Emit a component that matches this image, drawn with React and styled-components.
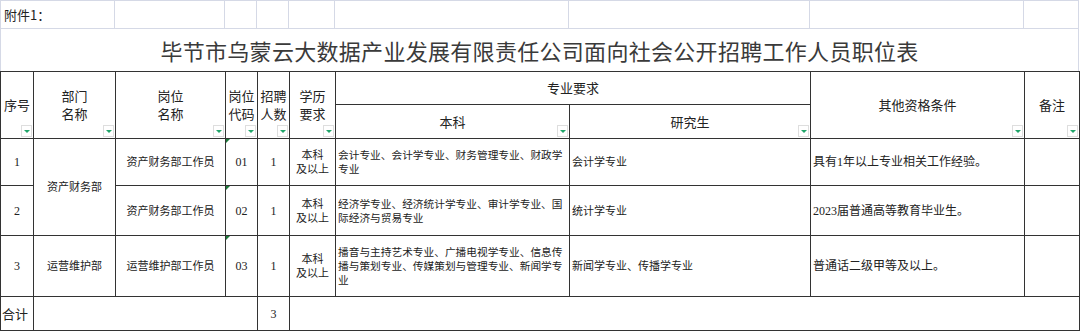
import styled, { createGlobalStyle } from 'styled-components';

const GlobalStyle = createGlobalStyle`
  html, body {
    margin: 0;
    padding: 0;
    background: #fff;
  }
  body {
    font-family: "Noto Sans CJK SC", sans-serif;
    color: #222;
  }
`;

const COLS = [33, 82, 110, 32, 32, 46, 234, 241, 214, 55];
const LIGHT = '#d5d9e6';
const DARK = '#333';

const Sheet = styled.div`
  width: 1079px;
`;

const TopRow = styled.div`
  display: grid;
  grid-template-columns: 115px ${COLS.slice(2).map((w) => `${w}px`).join(' ')};
  height: 28px;
  border-top: 1px solid ${LIGHT};
  box-sizing: border-box;
`;

const TopCell = styled.div`
  border-right: 1px solid ${LIGHT};
  border-bottom: 1px solid ${LIGHT};
  font-size: 13px;
  line-height: 27px;
  padding-left: 3px;
  color: #222;

  &:first-child {
    border-left: 1px solid ${LIGHT};
  }
`;

const Title = styled.div`
  height: 43px;
  border-left: 1px solid ${LIGHT};
  border-right: 1px solid ${LIGHT};
  box-sizing: border-box;
  display: flex;
  align-items: center;
  justify-content: center;
  font-size: 22px;
  color: #3a3a3a;
  letter-spacing: 0.3px;
`;

const Table = styled.table`
  width: 1079px;
  table-layout: fixed;
  border-collapse: collapse;
  font-family: "Liberation Serif", "Noto Sans CJK SC", serif;
`;

const Row = styled.tr`
  height: ${(p) => p.$h}px;
`;

const Th = styled.th`
  position: relative;
  border: 1px solid ${DARK};
  padding: 0;
  font-family: "Noto Sans CJK SC", sans-serif;
  font-weight: 400;
  font-size: 13px;
  line-height: 18px;
  color: #222;
  text-align: center;
  vertical-align: middle;
  white-space: nowrap;
`;

const FilterBtn = styled.span`
  position: absolute;
  right: 1px;
  bottom: 1px;
  width: 11px;
  height: 12px;
  box-sizing: border-box;
  border: 1px solid #dedede;
  background: #fff;

  &::after {
    content: '';
    position: absolute;
    left: 2px;
    top: 4px;
    border-left: 3px solid transparent;
    border-right: 3px solid transparent;
    border-top: 3px solid #21a56a;
  }
`;

const Td = styled.td`
  border: 1px solid ${DARK};
  padding: ${(p) => (p.$align === 'left' ? '0 0 0 2px' : '0')};
  font-size: ${(p) => p.$size || 11}px;
  line-height: ${(p) => (p.$size === 12 ? 16 : 14)}px;
  text-align: ${(p) => p.$align || 'center'};
  vertical-align: middle;
  white-space: nowrap;
  overflow: hidden;
  color: #222;
`;

const CodeCell = styled(Td)`
  position: relative;

  &::before {
    content: '';
    position: absolute;
    left: 0;
    top: 0;
    border-top: 4px solid #1c7a3a;
    border-right: 4px solid transparent;
  }
`;

const SumLabel = styled(Td)`
  font-family: "Noto Sans CJK SC", sans-serif;
  font-size: 13px;
  text-align: left;
  padding-left: 1px;
`;

const rows = [
  {
    no: '1',
    dept: '资产财务部',
    deptSpan: 2,
    post: '资产财务部工作员',
    code: '01',
    count: '1',
    major: ['会计专业、会计学专业、财务管理专业、财政学', '专业'],
    grad: '会计学专业',
    other: '具有1年以上专业相关工作经验。',
    h: 47,
  },
  {
    no: '2',
    post: '资产财务部工作员',
    code: '02',
    count: '1',
    major: ['经济学专业、经济统计学专业、审计学专业、国', '际经济与贸易专业'],
    grad: '统计学专业',
    other: '2023届普通高等教育毕业生。',
    h: 50,
  },
  {
    no: '3',
    dept: '运营维护部',
    deptSpan: 1,
    post: '运营维护部工作员',
    code: '03',
    count: '1',
    major: [
      '播音与主持艺术专业、广播电视学专业、信息传',
      '播与策划专业、传媒策划与管理专业、新闻学专',
      '业',
    ],
    grad: '新闻学专业、传播学专业',
    other: '普通话二级甲等及以上。',
    h: 61,
  },
];

const Lines = ({ items }) =>
  items.map((t, i) => (
    <span key={i}>
      {i > 0 && <br />}
      {t}
    </span>
  ));

const App = () => {
  return (
    <>
      <GlobalStyle />
      <Sheet>
        <TopRow>
          <TopCell>附件1：</TopCell>
          {COLS.slice(2).map((w, i) => (
            <TopCell key={i} />
          ))}
        </TopRow>
        <Title>毕节市乌蒙云大数据产业发展有限责任公司面向社会公开招聘工作人员职位表</Title>
        <Table>
          <colgroup>
            {COLS.map((w, i) => (
              <col key={i} style={{ width: w }} />
            ))}
          </colgroup>
          <thead>
            <Row $h={33}>
              <Th rowSpan={2}>
                序号
                <FilterBtn />
              </Th>
              <Th rowSpan={2}>
                <Lines items={['部门', '名称']} />
                <FilterBtn />
              </Th>
              <Th rowSpan={2}>
                <Lines items={['岗位', '名称']} />
                <FilterBtn />
              </Th>
              <Th rowSpan={2}>
                <Lines items={['岗位', '代码']} />
                <FilterBtn />
              </Th>
              <Th rowSpan={2}>
                <Lines items={['招聘', '人数']} />
                <FilterBtn />
              </Th>
              <Th rowSpan={2}>
                <Lines items={['学历', '要求']} />
                <FilterBtn />
              </Th>
              <Th colSpan={2}>专业要求</Th>
              <Th rowSpan={2}>
                其他资格条件
                <FilterBtn />
              </Th>
              <Th rowSpan={2}>
                备注
                <FilterBtn />
              </Th>
            </Row>
            <Row $h={34}>
              <Th>
                本科
                <FilterBtn />
              </Th>
              <Th>
                研究生
                <FilterBtn />
              </Th>
            </Row>
          </thead>
          <tbody>
            {rows.map((r) => (
              <Row $h={r.h} key={r.no}>
                <Td $size={12}>{r.no}</Td>
                {r.dept && <Td rowSpan={r.deptSpan}>{r.dept}</Td>}
                <Td>{r.post}</Td>
                <CodeCell $size={12}>{r.code}</CodeCell>
                <Td $size={12}>{r.count}</Td>
                <Td>
                  <Lines items={['本科', '及以上']} />
                </Td>
                <Td $align="left" $size={10.7}>
                  <Lines items={r.major} />
                </Td>
                <Td $align="left">{r.grad}</Td>
                <Td $align="left" $size={12}>
                  {r.other}
                </Td>
                <Td />
              </Row>
            ))}
            <Row $h={34}>
              <SumLabel>合计</SumLabel>
              <Td colSpan={3} />
              <Td $size={12}>3</Td>
              <Td colSpan={5} />
            </Row>
          </tbody>
        </Table>
      </Sheet>
    </>
  );
};

export default App;
